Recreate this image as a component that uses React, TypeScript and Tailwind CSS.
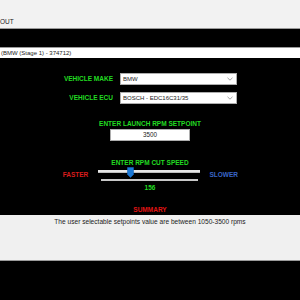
import React from "react";

function Select({ value }: { value: string }) {
  return (
    <div className="w-[117px] h-[12px] bg-white border border-[#adadad] flex items-center justify-between pl-[2px] pr-[3px]">
      <span className="text-[6px] leading-none text-[#222]">{value}</span>
      <svg width="6" height="4" viewBox="0 0 6 4">
        <path d="M0.5 0.8 L3 3.2 L5.5 0.8" fill="none" stroke="#8a8a8a" strokeWidth="0.8" />
      </svg>
    </div>
  );
}

export default function App() {
  return (
    <div
      className="w-[300px] h-[300px] bg-black overflow-hidden flex flex-col"
      style={{ fontFamily: '"Liberation Sans", Arial, sans-serif' }}
    >
      {/* top bar */}
      <div className="h-[29px] shrink-0 bg-[#f2f2f2] border-b border-[#9a9a9a] flex items-end pb-[3px]">
        <span className="text-[6.5px] leading-none text-[#222]">OUT</span>
      </div>
      <div className="h-[18px] shrink-0" />
      <div className="h-[11px] shrink-0 bg-white border-t border-[#9a9a9a] flex items-center pl-[1px]">
        <span className="text-[6px] leading-none text-[#222]">(BMW (Stage 1) - 374712)</span>
      </div>

      {/* form */}
      <div className="h-[157px] shrink-0 flex flex-col">
        <div className="mt-[15px] flex items-center h-[12px]">
          <div className="w-[113px] text-right text-[6.5px] font-bold leading-none text-[#22dd22]">VEHICLE MAKE</div>
          <div className="ml-[7px]"><Select value="BMW" /></div>
        </div>
        <div className="mt-[7px] flex items-center h-[12px]">
          <div className="w-[113px] text-right text-[6.5px] font-bold leading-none text-[#22dd22]">VEHICLE ECU</div>
          <div className="ml-[7px]"><Select value="BOSCH - EDC16C31/35" /></div>
        </div>

        <div className="mt-[16px] h-[8px] flex items-center justify-center text-[6.5px] font-bold leading-none text-[#22dd22]">
          ENTER LAUNCH RPM SETPOINT
        </div>
        <div className="mt-[1px] flex justify-center">
          <div className="w-[80px] h-[12px] bg-white border border-[#adadad] flex items-center justify-center text-[6.3px] leading-none text-[#222]">
            3500
          </div>
        </div>

        <div className="mt-[18px] h-[8px] flex items-center justify-center text-[6.5px] font-bold leading-none text-[#22dd22]">
          ENTER RPM CUT SPEED
        </div>
        <div className="h-[17px] flex items-center justify-center">
          <span className="w-[26px] text-[6.5px] font-bold leading-none text-[#d81c1c] text-center">FASTER</span>
          <div className="ml-[9px] w-[102px] h-[17px] relative">
            <div className="absolute left-0 right-0 top-[3px] h-[3px] bg-[#e6e6e6] border-b border-[#bdbdbd]" />
            <div className="absolute left-[3px] right-[2px] top-[12px] h-[2px] bg-[#c8c8c8]" />
            <svg className="absolute left-[29px] top-0" width="7" height="11" viewBox="0 0 7 11">
              <path d="M0.5 0.5 H6.5 V7.5 L3.5 10.5 L0.5 7.5 Z" fill="#1a78d6" stroke="#1565b8" strokeWidth="0.6" />
            </svg>
          </div>
          <span className="ml-[10px] w-[28px] text-[6.5px] font-bold leading-none text-[#3a66c8] text-center">SLOWER</span>
        </div>
        <div className="h-[8px] flex items-center justify-center text-[6.5px] font-bold leading-none text-[#22dd22]">
          156
        </div>
        <div className="mt-[14px] h-[8px] flex items-center justify-center text-[6.5px] font-bold leading-none text-[#e01414]">
          SUMMARY
        </div>
      </div>

      {/* summary area */}
      <div className="h-[46px] shrink-0 bg-[#f0f0f0] border-b border-[#9a9a9a] flex justify-center pt-[4px]">
        <span className="text-[6.6px] leading-none text-[#222] h-[7px]">
          The user selectable setpoints value are between 1050-3500 rpms
        </span>
      </div>
    </div>
  );
}
